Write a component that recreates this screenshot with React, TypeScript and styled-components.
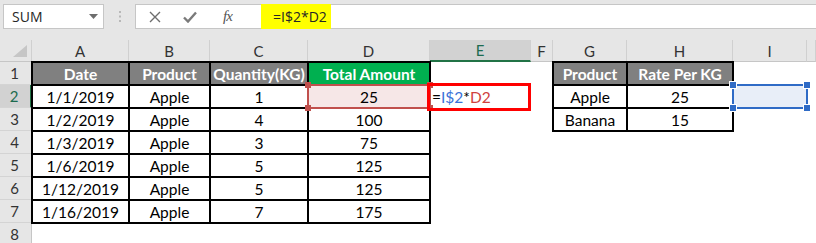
import React from "react";
import styled, { createGlobalStyle, css } from "styled-components";

//#region Style Definitions
const GlobalStyle = createGlobalStyle`
  html, body {
    margin: 0;
    padding: 0;
    background: #ffffff;
  }
  body {
    width: 816px;
    height: 243px;
    overflow: hidden;
    font-family: Lato, "Liberation Sans", sans-serif;
  }
`;

const Toolbar = styled.div`
  display: flex;
  align-items: flex-start;
  height: 40px;
  box-sizing: border-box;
  padding: 4px 0 0 3px;
  background: #e6e6e6;
`;

const NameBox = styled.div`
  width: 101px;
  height: 25px;
  box-sizing: border-box;
  display: flex;
  align-items: center;
  justify-content: space-between;
  padding: 0 5px 0 8px;
  background: #ffffff;
  border: 1px solid #c6c6c6;
  font: 14px "Open Sans", "Liberation Sans", sans-serif;
  color: #262626;
`;

const Grip = styled.div`
  width: 31px;
  height: 25px;
  display: flex;
  align-items: center;
  justify-content: center;
`;

const FormulaBar = styled.div`
  flex: 1;
  height: 25px;
  box-sizing: border-box;
  display: flex;
  background: #ffffff;
  border: 1px solid #c6c6c6;
  border-right: none;
`;

const FormulaButtons = styled.div`
  width: 112px;
  display: flex;
  align-items: center;
  padding-left: 13px;
  gap: 22px;
`;

const FxLabel = styled.span`
  font: italic 15px "Liberation Serif", serif;
  color: #555555;
  letter-spacing: -1px;
  margin-left: 4px;
`;

const FormulaText = styled.div`
  margin: -1px 0;
  width: 70px;
  display: flex;
  align-items: center;
  padding-left: 12px;
  box-sizing: border-box;
  background: #ffff00;
  font: 14px "Open Sans", "Liberation Sans", sans-serif;
  color: #262626;
`;

const Sheet = styled.div`
  display: flex;
  flex-direction: column;
`;

const Row = styled.div<{ $h: number }>`
  display: flex;
  height: ${(p) => p.$h}px;
`;

const Corner = styled.div`
  position: relative;
  width: 32px;
  flex: none;
  box-sizing: border-box;
  background: #e6e6e6;
  border-right: 1px solid #d0d0d0;
  border-bottom: 1px solid #c6c6c6;
  display: flex;
  align-items: flex-end;
  justify-content: flex-end;
  padding: 0 4px 4px 0;
`;

const CornerTriangle = styled.div`
  width: 0;
  height: 0;
  border-left: 14px solid transparent;
  border-bottom: 12px solid #c6c6c6;
`;

const ColHead = styled.div<{ $w: number; $active?: boolean }>`
  width: ${(p) => p.$w}px;
  flex: none;
  box-sizing: border-box;
  display: flex;
  align-items: center;
  justify-content: center;
  background: ${(p) => (p.$active ? "#d2d2d2" : "#e6e6e6")};
  border-right: 1px solid #d0d0d0;
  border-bottom: ${(p) => (p.$active ? "2px solid #217346" : "1px solid #c6c6c6")};
  font-size: 15px;
  color: ${(p) => (p.$active ? "#1d6b4f" : "#333333")};
`;

const RowHead = styled.div<{ $active?: boolean }>`
  width: 32px;
  flex: none;
  box-sizing: border-box;
  display: flex;
  align-items: center;
  justify-content: center;
  padding-right: 2px;
  background: ${(p) => (p.$active ? "#d2d2d2" : "#e6e6e6")};
  border-bottom: 1px solid #d4d4d4;
  border-right: ${(p) => (p.$active ? "2px solid #217346" : "1px solid #c6c6c6")};
  font-size: 15px;
  color: ${(p) => (p.$active ? "#1d6b4f" : "#333333")};
`;

const Cell = styled.div<{ $w: number; $fill?: string; $head?: boolean; $boxed?: boolean; $left?: boolean }>`
  position: relative;
  width: ${(p) => p.$w}px;
  flex: none;
  display: flex;
  align-items: center;
  justify-content: ${(p) => (p.$left ? "flex-start" : "center")};
  padding-left: ${(p) => (p.$left ? "2px" : "0")};
  box-sizing: border-box;
  background: ${(p) => p.$fill || "transparent"};
  font-size: 15.5px;
  font-weight: ${(p) => (p.$head ? 700 : 400)};
  color: ${(p) => (p.$head ? "#ffffff" : "#000000")};
  white-space: nowrap;
  ${(p) =>
    p.$boxed &&
    css`
      &::before {
        content: "";
        position: absolute;
        top: -1px;
        left: -1px;
        right: -1px;
        bottom: -1px;
        border: 2px solid #000000;
        pointer-events: none;
      }
    `}
`;

const CellText = styled.span`
  position: relative;
  z-index: 3;
`;

const RefBox = styled.div<{ $color: string; $fill: string }>`
  position: absolute;
  top: -1px;
  left: -1px;
  right: -1px;
  bottom: -1px;
  border: 2px solid ${(p) => p.$color};
  background: ${(p) => p.$fill};
  z-index: 2;
`;

const Handle = styled.span<{ $color: string; $x: "left" | "right"; $y: "top" | "bottom"; $outline?: boolean }>`
  position: absolute;
  width: 6px;
  height: 6px;
  box-sizing: border-box;
  background: ${(p) => p.$color};
  ${(p) => p.$x}: -4px;
  ${(p) => p.$y}: -4px;
  ${(p) => p.$outline && "outline: 1px solid #ffffff;"}
`;

const EditBox = styled.div`
  position: absolute;
  top: -2px;
  left: -3px;
  right: 0;
  bottom: -3px;
  border: 3px solid #ff0000;
  z-index: 4;
  pointer-events: none;
`;

const RefText = styled.span<{ $color: string }>`
  color: ${(p) => p.$color};
`;
//#endregion

// last column only peeks in at the right edge, so its letter is not shown
const COLS = [
  { key: "A", w: 97 },
  { key: "B", w: 81 },
  { key: "C", w: 98 },
  { key: "D", w: 122 },
  { key: "E", w: 101 },
  { key: "F", w: 22 },
  { key: "G", w: 74 },
  { key: "H", w: 106 },
  { key: "I", w: 74 },
  { key: "", w: 9 },
];

const DATA: string[][] = [
  ["Date", "Product", "Quantity(KG)", "Total Amount", "", "", "Product", "Rate Per KG"],
  ["1/1/2019", "Apple", "1", "25", "", "", "Apple", "25"],
  ["1/2/2019", "Apple", "4", "100", "", "", "Banana", "15"],
  ["1/3/2019", "Apple", "3", "75"],
  ["1/6/2019", "Apple", "5", "125"],
  ["1/12/2019", "Apple", "5", "125"],
  ["1/16/2019", "Apple", "7", "175"],
  [],
];

const BLUE = "#2f6bc6";
const RED = "#c0504d";

function Handles(props: { color: string; outline?: boolean }) {
  return (
    <>
      <Handle $color={props.color} $x="left" $y="top" $outline={props.outline} />
      <Handle $color={props.color} $x="right" $y="top" $outline={props.outline} />
      <Handle $color={props.color} $x="left" $y="bottom" $outline={props.outline} />
      <Handle $color={props.color} $x="right" $y="bottom" $outline={props.outline} />
    </>
  );
}

function isBoxed(row: number, col: number) {
  if (col <= 3 && row <= 7) return true;
  if ((col === 6 || col === 7) && row <= 3) return true;
  return false;
}

function SheetCell(props: { row: number; col: number }) {
  const { row, col } = props;
  const w = COLS[col].w;
  const value = DATA[row - 1]?.[col] ?? "";
  const boxed = isBoxed(row, col);
  const head = row === 1 && boxed;
  const fill = head ? (col === 3 ? "#00b050" : "#808080") : undefined;

  // E2 holds the formula being edited
  if (row === 2 && col === 4) {
    return (
      <Cell $w={w} $left>
        <CellText>
          =<RefText $color="#3a72d8">I$2</RefText>*<RefText $color="#d0413d">D2</RefText>
        </CellText>
        <EditBox />
      </Cell>
    );
  }

  return (
    <Cell $w={w} $fill={fill} $head={head} $boxed={boxed}>
      {row === 2 && col === 3 && (
        <RefBox $color={RED} $fill="#f6e7e7">
          <Handles color={RED} />
        </RefBox>
      )}
      {row === 2 && col === 8 && (
        <RefBox $color={BLUE} $fill="#e8eef8">
          <Handles color={BLUE} outline />
        </RefBox>
      )}
      {value && <CellText>{value}</CellText>}
    </Cell>
  );
}

export default function App() {
  return (
    <>
      <GlobalStyle />
      <Toolbar>
        <NameBox>
          SUM
          <svg width="9" height="5" viewBox="0 0 9 5">
            <path d="M0 0 H9 L4.5 5 Z" fill="#6d6d6d" />
          </svg>
        </NameBox>
        <Grip>
          <svg width="2" height="11" viewBox="0 0 2 11">
            <rect x="0" y="0" width="2" height="2" fill="#b8b8b8" />
            <rect x="0" y="4.5" width="2" height="2" fill="#b8b8b8" />
            <rect x="0" y="9" width="2" height="2" fill="#b8b8b8" />
          </svg>
        </Grip>
        <FormulaBar>
          <FormulaButtons>
            <svg width="12" height="12" viewBox="0 0 12 12">
              <path d="M1 1 L11 11 M11 1 L1 11" stroke="#6d6d6d" strokeWidth="1.4" />
            </svg>
            <svg width="14" height="12" viewBox="0 0 14 12">
              <path d="M1 6.5 L5 10.5 L13 1.5" stroke="#7a7a7a" strokeWidth="2.4" fill="none" />
            </svg>
            <FxLabel>fx</FxLabel>
          </FormulaButtons>
          <FormulaText>=I$2*D2</FormulaText>
        </FormulaBar>
      </Toolbar>
      <Sheet>
        <Row $h={22}>
          <Corner>
            <CornerTriangle />
          </Corner>
          {COLS.map((c, j) => (
            <ColHead key={j} $w={c.w} $active={c.key === "E"}>
              {c.key}
            </ColHead>
          ))}
        </Row>
        {DATA.map((_, i) => (
          <Row key={i} $h={23}>
            <RowHead $active={i === 1}>{i + 1}</RowHead>
            {COLS.map((c, j) => (
              <SheetCell key={j} row={i + 1} col={j} />
            ))}
          </Row>
        ))}
      </Sheet>
    </>
  );
}
